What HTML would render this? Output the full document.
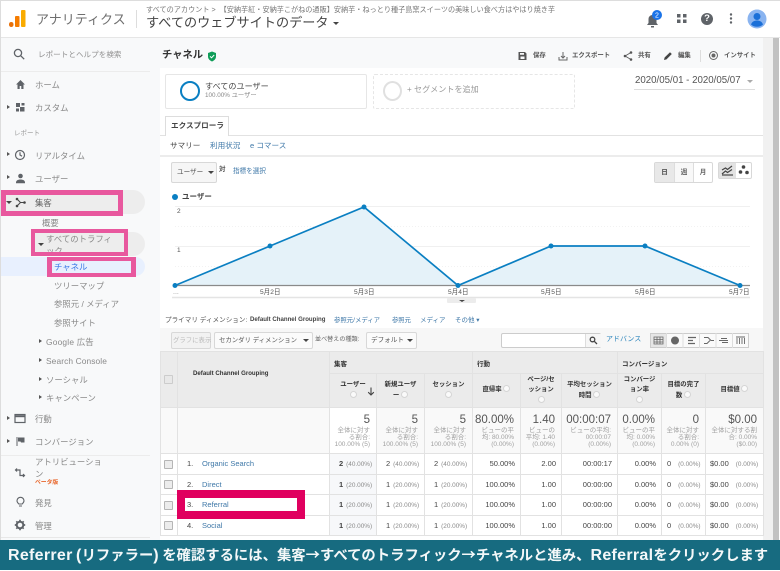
<!DOCTYPE html>
<html lang="ja"><head><meta charset="utf-8"><title>チャネル</title>
<style>
html,body{margin:0;padding:0}
body{width:780px;height:570px;position:relative;overflow:hidden;background:#fff;font-family:"Liberation Sans","Noto Sans CJK JP",sans-serif;color:#666}
#w{position:absolute;inset:0;filter:blur(.35px)}
.a{position:absolute;white-space:nowrap}
.n{font-size:8.4px;line-height:14px;color:#8a8a8a;margin-top:.5px}
.tri{position:absolute;width:0;height:0;border-top:2.5px solid transparent;border-bottom:2.5px solid transparent;border-left:3px solid #555}
.dn{position:absolute;width:0;height:0;border-left:3px solid transparent;border-right:3px solid transparent;border-top:3px solid #444}
.lnk{color:#3f78a8}
.pk{position:absolute;border:4px solid #e8589e;box-sizing:border-box}
.btn{position:absolute;box-sizing:border-box;background:#f6f6f6;border:1px solid #d8d8d8;border-radius:2px;font-size:6.6px;line-height:14px;color:#555;white-space:nowrap}
.tl{font-size:6.4px;line-height:12px;color:#555;font-weight:700}
table{position:absolute;left:160px;top:351px;width:603px;border-collapse:collapse;table-layout:fixed}
td,th{border:1px solid #e2e2e2;padding:0;overflow:hidden;box-sizing:border-box}
.h1 th{height:22px;background:#ebebeb;text-align:left;padding-left:4px;font-size:6.5px;color:#333}
.h2 th{height:34px;background:#ebebeb;text-align:center;font-size:6.4px;line-height:10.5px;color:#333}
.q{display:inline-block;width:7px;height:7px;border-radius:50%;background:#fafafa;border:1px solid #d5d5d5;box-sizing:border-box;vertical-align:-1px}
.t td{height:46px;background:#f9f9f9;text-align:right;vertical-align:top;padding:4.5px 6px 0 0;color:#a0a0a0;font-size:6.5px;line-height:7.4px}
.t td b{display:block;font-weight:400;font-size:11.5px;line-height:14px;color:#555}
.t td.u{background:#fff}
.r td{height:20.5px;background:#fff;font-size:7.5px;color:#444;text-align:right;padding-right:5px}
.r td.u{background:#f7f8fa;text-align:left;padding-left:9px;font-weight:700}
.r td.l{text-align:left;padding-left:9px}
.r td.d{text-align:left;padding-left:9px}
.r td.c{text-align:center;padding:0 2px 0 0}
.r i{font-style:normal;font-weight:400;font-size:6.4px;color:#8a8a8a;margin-left:3px}
.cb{display:inline-block;width:7px;height:7px;border:1px solid #b5b5b5;background:#ececec;border-radius:1px;vertical-align:middle}
.r .no{display:inline-block;width:15px}
.ban{font-family:"Noto Sans CJK JP",sans-serif;font-size:14.35px;line-height:30px;font-weight:700;color:#f4f8f9}
.ban span{font-family:"Liberation Sans",sans-serif;font-size:16px;letter-spacing:.3px}
</style></head><body><div id="w">

<!-- page chrome -->
<div class="a" style="left:0;top:37px;width:160px;height:503px;background:#f8f9fa"></div>
<div class="a" style="left:160px;top:37px;width:603px;height:31px;background:#f8f9fa"></div>
<div class="a" style="left:763px;top:37px;width:10px;height:503px;background:#f1f1f1"></div>
<div class="a" style="left:773px;top:37px;width:6px;height:503px;background:#c2c2c2"></div>
<div class="a" style="left:0;top:37px;width:780px;height:1px;background:#e6e6e6"></div>
<div class="a" style="left:0;top:0;width:780px;height:1px;background:#ddd"></div>
<div class="a" style="left:0;top:0;width:1px;height:570px;background:#ddd"></div>

<!-- header -->
<svg class="a" style="left:8px;top:9px" width="18" height="20"><rect x="1" y="13" width="4.5" height="5" rx="2.2" fill="#e8710a"/><rect x="7" y="7" width="4.5" height="11" rx="1" fill="#f57c00"/><rect x="13" y="1" width="4.5" height="17" rx="1" fill="#f9ab00"/></svg>
<div class="a" style="left:36px;top:10px;font-size:13px;line-height:20px;color:#6f6f6f">アナリティクス</div>
<div class="a" style="left:136px;top:10px;width:1px;height:18px;background:#ddd"></div>
<div class="a" style="left:146px;top:5px;font-size:7.15px;line-height:11px;color:#777">すべてのアカウント &gt;&nbsp; 【安納芋紅・安納芋こがねの通販】安納芋・ねっとり種子島窯スイーツの美味しい食べ方はやはり焼き芋</div>
<div class="a" style="left:146px;top:13px;font-size:13.15px;line-height:19px;color:#444">すべてのウェブサイトのデータ</div>
<div class="dn" style="left:333px;top:22px"></div>

<svg class="a" style="left:644px;top:9px" width="24" height="20"><path d="M3 16h11l-1.500-2v-4a4 4 0 0 0-8 0v4z" fill="#5f6368"/><rect x="7" y="17" width="3" height="1.500" fill="#5f6368"/><circle cx="13" cy="6" r="5" fill="#1a73e8"/><text x="13" y="8.500" font-size="7" fill="#fff" text-anchor="middle" font-family="Liberation Sans">2</text></svg>
<svg class="a" style="left:676px;top:12px" width="12" height="12" fill="#5f6368"><rect x="1" y="2" width="3.500" height="3.500"/><rect x="7" y="2" width="3.500" height="3.500"/><rect x="1" y="7.500" width="3.500" height="3.500"/><rect x="7" y="7.500" width="3.500" height="3.500"/></svg>
<div class="a" style="left:701px;top:13px;width:12px;height:12px;border-radius:50%;background:#5f6368;color:#fff;font:700 9.500px/12px 'Liberation Sans',sans-serif;text-align:center">?</div>
<svg class="a" style="left:729px;top:12px" width="4" height="13" fill="#5f6368"><circle cx="2" cy="2.500" r="1.200"/><circle cx="2" cy="6.500" r="1.200"/><circle cx="2" cy="10.500" r="1.200"/></svg>
<svg class="a" style="left:747px;top:9px" width="20" height="20"><circle cx="10" cy="10" r="9.500" fill="#8ab4f0"/><circle cx="10" cy="7.500" r="3.500" fill="#1a6fd8"/><path d="M4 15.500c1-3 3.500-4 6-4s5 1 6 4a9 9 0 0 1-12 0z" fill="#1a6fd8"/></svg>

<!-- sidebar -->
<svg class="a" style="left:13px;top:48px" width="12" height="12" fill="none" stroke="#5f6368" stroke-width="1.300"><circle cx="5" cy="5" r="3.600"/><path d="M7.800 7.800l3.400 3.400"/></svg>
<div class="a" style="left:38px;top:48px;font-size:7.6px;line-height:14px;color:#8f8f8f">レポートとヘルプを検索</div>
<div class="a" style="left:1px;top:71px;width:149px;height:1px;background:#ececec"></div>

<svg class="a" style="left:15px;top:79px" width="11" height="11" fill="#5f6368"><path d="M5.500 1L1 5.500h1.500V10h2.200V7h1.600v3h2.200V5.500H10z"/></svg>
<div class="a n" style="left:35px;top:77px">ホーム</div>
<div class="tri" style="left:7px;top:105px"></div>
<svg class="a" style="left:15px;top:102px" width="11" height="11" fill="#5f6368"><rect x="1" y="1" width="4" height="4"/><rect x="6.500" y="1" width="3" height="2.500"/><rect x="1" y="6.500" width="3" height="3"/><rect x="5" y="5" width="4.500" height="4.500"/></svg>
<div class="a n" style="left:35px;top:100.500px">カスタム</div>
<div class="a" style="left:14px;top:128px;font-size:6.5px;line-height:12px;color:#999">レポート</div>
<div class="tri" style="left:7px;top:152px"></div>
<svg class="a" style="left:14px;top:149px" width="12" height="12" fill="none" stroke="#5f6368" stroke-width="1.200"><circle cx="6" cy="6" r="4.500"/><path d="M6 3.200V6l2 1.200"/></svg>
<div class="a n" style="left:35px;top:148px">リアルタイム</div>
<div class="tri" style="left:7px;top:175px"></div>
<svg class="a" style="left:15px;top:173px" width="11" height="11" fill="#5f6368"><circle cx="5.500" cy="3" r="2.300"/><path d="M1 9.500c0-2 2-3 4.500-3s4.500 1 4.500 3v.8H1z"/></svg>
<div class="a n" style="left:35px;top:171px">ユーザー</div>

<div class="a" style="left:1px;top:190px;width:144px;height:24px;background:#ededed;border-radius:0 12px 12px 0"></div>
<div class="dn" style="left:6px;top:201px"></div>
<svg class="a" style="left:15px;top:197px" width="11" height="11" fill="#444" stroke="#444"><path d="M2 2l3.500 3.500L2 9M5.500 5.500H9" fill="none" stroke-width="1"/><circle cx="2" cy="2" r=".8"/><circle cx="2" cy="9" r=".8"/><circle cx="9.500" cy="5.500" r=".8"/></svg>
<div class="a n" style="left:35px;top:195px;color:#666">集客</div>
<div class="a n" style="left:42px;top:215.500px">概要</div>
<div class="a" style="left:31px;top:232px;width:114px;height:24px;background:#ededed;border-radius:0 12px 12px 0"></div>
<div class="dn" style="left:38px;top:243px"></div>
<div class="a n" style="left:46px;top:232px;line-height:12px;width:70px;white-space:normal;height:22px;overflow:hidden;word-break:break-all">すべてのトラフィック</div>
<div class="a" style="left:1px;top:257px;width:144px;height:19px;background:#e8f0fe;border-radius:0 10px 10px 0"></div>
<div class="a n" style="left:54px;top:259px;color:#3b78e7">チャネル</div>
<div class="a n" style="left:54px;top:278px">ツリーマップ</div>
<div class="a n" style="left:54px;top:296px">参照元 / メディア</div>
<div class="a n" style="left:54px;top:315px">参照サイト</div>
<div class="tri" style="left:39px;top:339px"></div>
<div class="a n" style="left:46px;top:334px;letter-spacing:.2px">Google 広告</div>
<div class="tri" style="left:39px;top:358px"></div>
<div class="a n" style="left:46px;top:353px;letter-spacing:.1px">Search Console</div>
<div class="tri" style="left:39px;top:377px"></div>
<div class="a n" style="left:46px;top:372px">ソーシャル</div>
<div class="tri" style="left:39px;top:395px"></div>
<div class="a n" style="left:46px;top:390px">キャンペーン</div>
<div class="tri" style="left:7px;top:416px"></div>
<svg class="a" style="left:14px;top:413px" width="12" height="11" fill="none" stroke="#5f6368" stroke-width="1.200"><rect x="1" y="1.500" width="10" height="8"/><path d="M1 3.200h10" stroke-width="2"/></svg>
<div class="a n" style="left:35px;top:411px">行動</div>
<div class="tri" style="left:7px;top:439px"></div>
<svg class="a" style="left:15px;top:436px" width="11" height="11" fill="#5f6368"><path d="M1.500 1h1v9h-1zM3 1.500h6.500v5H6L5.500 5.500H3z"/></svg>
<div class="a n" style="left:35px;top:434px">コンバージョン</div>
<div class="a" style="left:1px;top:455px;width:149px;height:1px;background:#ececec"></div>
<svg class="a" style="left:14px;top:467px" width="12" height="12" fill="none" stroke="#5f6368" stroke-width="1.200"><path d="M3 1.500l-1.500 1.500L3 4.500M1.500 3H6v5.500h4.500M9 7l1.500 1.500L9 10"/></svg>
<div class="a n" style="left:35px;top:455px;line-height:12.5px">アトリビューショ<br>ン</div>
<div class="a" style="left:35px;top:479px;font-size:5.8px;line-height:8px;font-weight:700;color:#e8662a">ベータ版</div>
<svg class="a" style="left:15px;top:496px" width="11" height="12" fill="none" stroke="#5f6368" stroke-width="1.100"><path d="M3.800 8C2.800 7 2 6.200 2 4.800a3.500 3.500 0 0 1 7 0C9 6.200 8.200 7 7.200 8zM4 10h3"/></svg>
<div class="a n" style="left:35px;top:495px">発見</div>
<svg class="a" style="left:14px;top:519px" width="12" height="12"><circle cx="6" cy="6" r="3.300" fill="none" stroke="#5f6368" stroke-width="2"/><path d="M6 .8v2M6 9.200v2M.8 6h2M9.200 6h2M2.300 2.300l1.500 1.500M8.200 8.200l1.500 1.500M2.300 9.700l1.500-1.500M8.200 3.800l1.500-1.500" stroke="#5f6368" stroke-width="1.700"/></svg>
<div class="a n" style="left:35px;top:518px">管理</div>
<div class="a" style="left:1px;top:537px;width:149px;height:1px;background:#e8e8e8"></div>

<!-- toolbar -->
<div class="a" style="left:162px;top:47px;font-size:10.3px;line-height:17px;font-weight:700;color:#333">チャネル</div>
<svg class="a" style="left:207px;top:51px" width="10" height="11"><path d="M5 .5L9 2v3.500c0 2.500-1.800 4-4 5-2.200-1-4-2.500-4-5V2z" fill="#0f9d58"/><path d="M3 5.300l1.500 1.500L7.200 4" stroke="#fff" fill="none"/></svg>
<svg class="a" style="left:518px;top:51px" width="9" height="10" fill="#555"><path d="M.5 1h6.500L8.500 2.500V9H.5zM2.500 5.500v2.500h4V5.500zM2 2v1.700h4V2z" fill-rule="evenodd"/></svg>
<div class="a tl" style="left:533px;top:50px">保存</div>
<svg class="a" style="left:558px;top:51px" width="10" height="10" fill="none" stroke="#666"><path d="M1 6v3h8V6M5 1v5.500M3 5l2 2 2-2"/></svg>
<div class="a tl" style="left:572px;top:50px">エクスポート</div>
<svg class="a" style="left:623px;top:51px" width="10" height="10" fill="#555" stroke="#555" stroke-width=".8"><path d="M8 1.500L2 5l6 3.500" fill="none"/><circle cx="8" cy="1.500" r=".9"/><circle cx="2" cy="5" r=".9"/><circle cx="8" cy="8.500" r=".9"/></svg>
<div class="a tl" style="left:638px;top:50px">共有</div>
<svg class="a" style="left:663px;top:51px" width="10" height="10" fill="#444"><path d="M1 9l.6-2.500L7 1.200 8.800 3 3.500 8.400z"/></svg>
<div class="a tl" style="left:678px;top:50px">編集</div>
<div class="a" style="left:700px;top:50px;width:1px;height:12px;background:#ddd"></div>
<svg class="a" style="left:708px;top:50px" width="11" height="11" fill="none" stroke="#666"><circle cx="5.500" cy="5.500" r="4"/><circle cx="5.500" cy="5.500" r="1.500" fill="#666"/></svg>
<div class="a tl" style="left:724px;top:50px">インサイト</div>

<!-- segments -->
<div class="a" style="left:165px;top:74px;width:202px;height:35px;box-sizing:border-box;border:1px solid #e6e6e6;border-radius:2px"></div>
<div class="a" style="left:180px;top:81px;width:20px;height:20px;box-sizing:border-box;border:2.500px solid #0a7fc2;border-radius:50%"></div>
<div class="a" style="left:205px;top:81px;font-size:8.1px;line-height:12px;color:#444">すべてのユーザー</div>
<div class="a" style="left:205px;top:91px;font-size:6.3px;line-height:10px;color:#888">100.00% ユーザー</div>
<div class="a" style="left:407px;top:83px;font-size:8.1px;line-height:13px;color:#999">+ セグメントを追加</div>
<div class="a" style="left:373px;top:74px;width:202px;height:35px;box-sizing:border-box;border:1px dashed #e6e6e6;border-radius:2px"></div>
<div class="a" style="left:383px;top:81px;width:19px;height:20px;box-sizing:border-box;border:2.500px solid #e0e0e0;border-radius:50%"></div>
<div class="a" style="left:635px;top:74px;font-size:9.7px;line-height:14px;color:#555">2020/05/01 - 2020/05/07</div>
<div class="dn" style="left:747px;top:80px;border-top-color:#aaa;border-left-width:3.500px;border-right-width:3.500px"></div>
<div class="a" style="left:634px;top:89px;width:121px;height:1px;background:#ddd"></div>

<!-- tabs -->
<div class="a" style="left:160px;top:135px;width:603px;height:1px;background:#e2e2e2"></div>
<div class="a" style="left:165px;top:116px;width:64px;height:20px;box-sizing:border-box;background:#fff;border:1px solid #ddd;border-bottom:none;font-size:7.6px;line-height:18px;font-weight:700;color:#444;padding-left:5px">エクスプローラ</div>
<div class="a" style="left:170px;top:139px;font-size:7.6px;line-height:13px;color:#444">サマリー</div>
<div class="a lnk" style="left:210px;top:139px;font-size:7.6px;line-height:13px">利用状況</div>
<div class="a lnk" style="left:250px;top:139px;font-size:7.6px;line-height:13px">e コマース</div>
<div class="a" style="left:160px;top:155px;width:603px;height:1.500px;background:#ececec"></div>

<div class="btn" style="left:171px;top:162px;width:46px;height:21px;padding:3px 0 0 5px">ユーザー</div>
<div class="dn" style="left:208px;top:171px"></div>
<div class="a" style="left:219px;top:164px;font-size:6.5px;line-height:11px;color:#555;font-weight:700">対</div>
<div class="a lnk" style="left:233px;top:166px;font-size:6.6px;line-height:12px">指標を選択</div>

<div class="btn" style="left:654px;top:162px;width:59px;height:21px;background:#fff"></div>
<div class="a" style="left:655px;top:163px;width:19px;height:19px;background:#e8e8e8;border-right:1px solid #ddd;font-size:6.5px;line-height:19px;text-align:center;font-weight:700;color:#444">日</div>
<div class="a" style="left:675px;top:163px;width:18px;height:19px;background:#f8f8f8;border-right:1px solid #ddd;font-size:6.5px;line-height:19px;text-align:center;font-weight:700;color:#666">週</div>
<div class="a" style="left:694px;top:163px;width:18px;height:19px;font-size:6.5px;line-height:19px;text-align:center;font-weight:700;color:#666">月</div>
<div class="btn" style="left:718px;top:162px;width:34px;height:17px;background:#fff"></div>
<div class="a" style="left:719px;top:163px;width:17px;height:15px;background:#e2e2e2"></div>
<svg class="a" style="left:721px;top:164px" width="13" height="12" fill="none" stroke="#444" stroke-width="1.200"><path d="M1 6l3.500-2 2 1.500L11 2M1 10l3.500-3 2 1.500L11 5.500" /><path d="M1 11h11"/></svg>
<svg class="a" style="left:738px;top:164px" width="12" height="12" fill="#444"><circle cx="5.500" cy="3" r="1.800"/><circle cx="2.500" cy="8" r="1.800"/><circle cx="9" cy="8.500" r="1.800"/></svg>

<!-- chart -->
<div class="a" style="left:172px;top:194px;width:6px;height:6px;background:#0a7fc2;border-radius:50%"></div>
<div class="a" style="left:182px;top:191px;font-size:7.5px;line-height:12px;color:#444;font-weight:700">ユーザー</div>
<svg class="a" style="left:160px;top:200px" width="603" height="105">
<path d="M15 6.500H590M15 46.500H590" stroke="#f0f0f0"/>
<path d="M15 26.500H590M15 66.500H590" stroke="#f2f2f2" stroke-dasharray="1 2"/>
<path d="M15 85.500L110 46 204 7 298 85.500 391 46 485 46 580 85.500z" fill="#e5f2f9"/>
<path d="M15 85.500H590" stroke="#8a8a8a" stroke-width="1.200"/>
<path d="M15 85.500L110 46 204 7 298 85.500 391 46 485 46 580 85.500" fill="none" stroke="#0a7fc2" stroke-width="1.700"/>
<g fill="#0a7fc2"><circle cx="15" cy="85.500" r="2.500"/><circle cx="110" cy="46" r="2.500"/><circle cx="204" cy="7" r="2.500"/><circle cx="298" cy="85.500" r="2.500"/><circle cx="391" cy="46" r="2.500"/><circle cx="485" cy="46" r="2.500"/><circle cx="580" cy="85.500" r="2.500"/></g>
<path d="M12 97.500H590" stroke="#e4e4e4" stroke-width="1.500"/>
<rect x="287" y="98" width="29" height="5" rx="1" fill="#ececec"/><path d="M299 100h6l-3 2z" fill="#444"/>
</svg>
<div class="a" style="left:177px;top:207px;font-size:6.5px;line-height:10px;color:#555">2</div>
<div class="a" style="left:177px;top:246px;font-size:6.5px;line-height:10px;color:#555">1</div>
<div class="a" style="left:173px;top:288px;font-size:7px;line-height:10px;color:#999">...</div>
<div class="a" style="left:260px;top:287px;font-size:6.6px;line-height:11px;color:#555">5月2日</div>
<div class="a" style="left:354px;top:287px;font-size:6.6px;line-height:11px;color:#555">5月3日</div>
<div class="a" style="left:448px;top:287px;font-size:6.6px;line-height:11px;color:#555">5月4日</div>
<div class="a" style="left:541px;top:287px;font-size:6.6px;line-height:11px;color:#555">5月5日</div>
<div class="a" style="left:635px;top:287px;font-size:6.6px;line-height:11px;color:#555">5月6日</div>
<div class="a" style="left:729px;top:287px;font-size:6.6px;line-height:11px;color:#555">5月7日</div>

<!-- dimension -->
<div class="a" style="left:165px;top:315px;font-size:6.6px;line-height:12px;color:#555">プライマリ ディメンション:</div>
<div class="a" style="left:250px;top:314px;font-size:6.1px;line-height:12px;font-weight:700;color:#444">Default Channel Grouping</div>
<div class="a lnk" style="left:334px;top:315px;font-size:6.4px;line-height:12px">参照元/メディア</div>
<div class="a lnk" style="left:392px;top:315px;font-size:6.3px;line-height:12px">参照元</div>
<div class="a lnk" style="left:420px;top:315px;font-size:6.5px;line-height:12px">メディア</div>
<div class="a lnk" style="left:455px;top:315px;font-size:6.5px;line-height:12px">その他 ▾</div>
<div class="a" style="left:160px;top:328px;width:603px;height:23px;background:#f7f7f7"></div>
<div class="btn" style="left:171px;top:332px;width:40px;height:17px;color:#bbb;padding:1px 0 0 1px;background:#f2f2f2;font-size:6.4px">グラフに表示</div>
<div class="btn" style="left:214px;top:332px;width:99px;height:17px;padding:1px 0 0 4px;background:#fbfbfb;font-size:6.4px">セカンダリ ディメンション</div>
<div class="dn" style="left:303px;top:339px"></div>
<div class="a" style="left:315px;top:334px;font-size:6.1px;line-height:12px;color:#666">並べ替えの種類:</div>
<div class="btn" style="left:366px;top:332px;width:51px;height:17px;padding:1px 0 0 4px;background:#fbfbfb;font-size:6.6px">デフォルト</div>
<div class="dn" style="left:407px;top:339px"></div>
<div class="a" style="left:501px;top:333px;width:100px;height:15px;box-sizing:border-box;background:#fff;border:1px solid #ccc;border-radius:2px"></div>
<div class="a" style="left:585px;top:334px;width:15px;height:13px;border-left:1px solid #ddd;background:#f6f6f6"></div>
<svg class="a" style="left:589px;top:336px" width="9" height="9" fill="none" stroke="#444" stroke-width="1.300"><circle cx="3.500" cy="3.500" r="2.300"/><path d="M5.300 5.300L8 8"/></svg>
<div class="a" style="left:606px;top:334px;font-size:7px;line-height:12px;color:#2e86bd">アドバンス</div>
<div class="a" style="left:650px;top:333px;width:99px;height:15px;box-sizing:border-box;border:1px solid #ccc;background:#fafafa"></div>
<div class="a" style="left:651px;top:334px;width:15px;height:13px;background:#e6e6e6"></div>
<svg class="a" style="left:650px;top:333px" width="99" height="15" fill="none" stroke="#666">
<path d="M16.500 0v15M33 0v15M49.500 0v15M66 0v15M82.500 0v15" stroke="#ddd"/>
<path d="M4 4h9v7H4zM4 6.500h9M4 9h9M7 4v7M10 4v7" stroke-width=".8"/>
<circle cx="25" cy="7.500" r="3.500" fill="#666"/>
<path d="M38 4.500h8M38 7.500h5M38 10.500h7" stroke-width="1.200"/>
<path d="M54 4.500h4l3 3h3M54 10.500h3l3-3" stroke-width="1"/>
<path d="M71 5.500h6M72 9.500h6M69 7.500h9" stroke-width="1"/>
<path d="M86 4h9M87 5v6M89.500 5v6M92 5v6M94.500 5v6" stroke-width=".9"/>
</svg>

<!-- table -->
<table>
<colgroup><col style="width:17px"><col style="width:152px"><col style="width:47px"><col style="width:48px"><col style="width:48px"><col style="width:48px"><col style="width:41px"><col style="width:56px"><col style="width:44px"><col style="width:44px"><col style="width:58px"></colgroup>
<tr class="h1"><th rowspan="2" style="padding:0 2px 0 0;text-align:center;background:#ebebeb"><span class="cb" style="background:#e8e8e8;border-color:#ccc"></span></th><th rowspan="2" style="padding:0 0 12px 15px;font-size:6.1px">Default Channel Grouping</th><th colspan="3">集客</th><th colspan="3">行動</th><th colspan="3">コンバージョン</th></tr>
<tr class="h2"><th>ユーザー<br><span class="q"></span></th><th>新規ユーザ<br>ー <span class="q"></span></th><th>セッション<br><span class="q"></span></th><th>直帰率 <span class="q"></span></th><th>ページ/セ<br>ッション<br><span class="q"></span></th><th>平均セッション<br>時間 <span class="q"></span></th><th>コンバージ<br>ョン率<br><span class="q"></span></th><th>目標の完了<br>数 <span class="q"></span></th><th>目標値 <span class="q"></span></th></tr>
<tr class="t"><td></td><td></td><td class="u"><b>5</b>全体に対す<br>る割合:<br>100.00% (5)</td><td><b>5</b>全体に対す<br>る割合:<br>100.00% (5)</td><td><b>5</b>全体に対す<br>る割合:<br>100.00% (5)</td><td><b>80.00%</b>ビューの平<br>均: 80.00%<br>(0.00%)</td><td><b>1.40</b>ビューの<br>平均: 1.40<br>(0.00%)</td><td><b>00:00:07</b>ビューの平均:<br>00:00:07<br>(0.00%)</td><td><b>0.00%</b>ビューの平<br>均: 0.00%<br>(0.00%)</td><td><b>0</b>全体に対す<br>る割合:<br>0.00% (0)</td><td><b>$0.00</b>全体に対する割<br>合: 0.00%<br>($0.00)</td></tr>
<tr class="r"><td class="c"><span class="cb"></span></td><td class="d"><span class="no">1.</span><span class="lnk">Organic Search</span></td><td class="u">2<i>(40.00%)</i></td><td class="l">2<i>(40.00%)</i></td><td class="l">2<i>(40.00%)</i></td><td>50.00%</td><td>2.00</td><td>00:00:17</td><td>0.00%</td><td class="l" style="padding-left:5px">0<i style="margin-left:7px">(0.00%)</i></td><td class="l" style="padding-left:4px">$0.00<i style="margin-left:7px">(0.00%)</i></td></tr>
<tr class="r"><td class="c"><span class="cb"></span></td><td class="d"><span class="no">2.</span><span class="lnk">Direct</span></td><td class="u">1<i>(20.00%)</i></td><td class="l">1<i>(20.00%)</i></td><td class="l">1<i>(20.00%)</i></td><td>100.00%</td><td>1.00</td><td>00:00:00</td><td>0.00%</td><td class="l" style="padding-left:5px">0<i style="margin-left:7px">(0.00%)</i></td><td class="l" style="padding-left:4px">$0.00<i style="margin-left:7px">(0.00%)</i></td></tr>
<tr class="r"><td class="c"><span class="cb"></span></td><td class="d"><span class="no">3.</span><span class="lnk">Referral</span></td><td class="u">1<i>(20.00%)</i></td><td class="l">1<i>(20.00%)</i></td><td class="l">1<i>(20.00%)</i></td><td>100.00%</td><td>1.00</td><td>00:00:00</td><td>0.00%</td><td class="l" style="padding-left:5px">0<i style="margin-left:7px">(0.00%)</i></td><td class="l" style="padding-left:4px">$0.00<i style="margin-left:7px">(0.00%)</i></td></tr>
<tr class="r"><td class="c"><span class="cb"></span></td><td class="d"><span class="no">4.</span><span class="lnk">Social</span></td><td class="u">1<i>(20.00%)</i></td><td class="l">1<i>(20.00%)</i></td><td class="l">1<i>(20.00%)</i></td><td>100.00%</td><td>1.00</td><td>00:00:00</td><td>0.00%</td><td class="l" style="padding-left:5px">0<i style="margin-left:7px">(0.00%)</i></td><td class="l" style="padding-left:4px">$0.00<i style="margin-left:7px">(0.00%)</i></td></tr>
</table>
<svg class="a" style="left:367px;top:387px" width="8" height="9" fill="none" stroke="#444" stroke-width="1.100"><path d="M4 .5V8M1.200 5.200L4 8l2.800-2.800"/></svg>

<!-- annotation boxes -->
<div class="pk" style="left:1px;top:190px;width:122px;height:26px;border-width:5px"></div>
<div class="pk" style="left:31px;top:229px;width:97px;height:27px"></div>
<div class="pk" style="left:47px;top:257px;width:89px;height:20px;border-width:4px 5px"></div>
<div class="a" style="left:177px;top:490px;width:128px;height:29px;box-sizing:border-box;border:solid #e0005f;border-width:8px"></div>

<!-- banner -->
<div class="a" style="left:0;top:540px;width:780px;height:30px;background:#176b80"></div>
<div class="a ban" style="left:8px;top:540px"><span>Referrer</span> <span>(</span>リファラー<span>)</span> を確認するには、集客→すべてのトラフィック→チャネルと進み、<span>Referral</span>をクリックします</div>
</div></body></html>
